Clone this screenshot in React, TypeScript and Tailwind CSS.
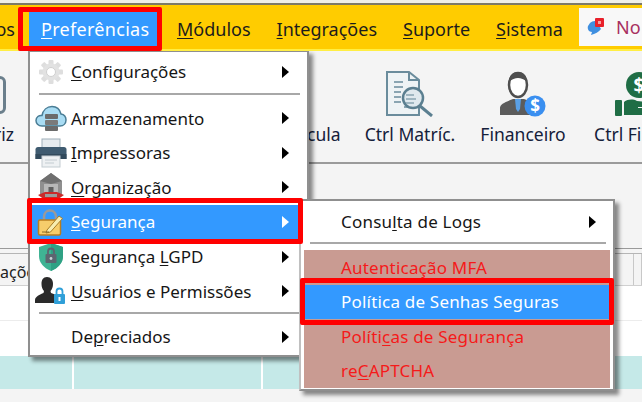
import { ReactNode } from "react";

const font = { fontFamily: '"Noto Sans", sans-serif' };

function GearIcon() {
  const teeth = [0, 45, 90, 135, 180, 225, 270, 315];
  return (
    <svg width="26" height="26" viewBox="0 0 26 26">
      {teeth.map((a) => (
        <rect key={a} x="10.500" y="1" width="5" height="6" rx="1" fill="#dedede" transform={`rotate(${a} 13 13)`} />
      ))}
      <circle cx="13" cy="13" r="8.500" fill="#e2e2e2" />
      <circle cx="13" cy="13" r="4.500" fill="#ffffff" stroke="#d0d0d0" />
    </svg>
  );
}

function CloudIcon() {
  return (
    <svg width="32" height="27" viewBox="0 0 32 27">
      <path d="M7 21C3 21 1 18 1 15.500C1 12 4 10 7 10.500C8 5 12 1.500 17 1.500C22 1.500 25 5 26 9C29 9.500 31 12 31 15C31 18.500 28.500 21 25 21Z" fill="#a9dcf3" stroke="#4a7d95" strokeWidth="1.500" />
      <rect x="10" y="9" width="13" height="5" rx="1" fill="#6b6b6b" />
      <rect x="10" y="15" width="13" height="5" rx="1" fill="#7a7a7a" />
      <rect x="10" y="21" width="13" height="5" rx="1" fill="#6b6b6b" />
    </svg>
  );
}

function PrinterIcon() {
  return (
    <svg width="32" height="30" viewBox="0 0 32 30">
      <rect x="7" y="1" width="18" height="9" fill="#e6ebee" stroke="#9fb0b9" />
      <path d="M3 9H29C30.500 9 31.500 10 31.500 11.500V21H.5V11.500C.5 10 1.500 9 3 9Z" fill="#3f5b70" />
      <rect x=".5" y="16" width="31" height="5" fill="#324a5c" />
      <rect x="7" y="18" width="18" height="11" fill="#eef1f3" stroke="#c3ccd1" />
      <path d="M10 22H22M10 25H19" stroke="#c3ccd1" />
    </svg>
  );
}

function OrgIcon() {
  return (
    <svg width="28" height="28" viewBox="0 0 28 28">
      <path d="M14 0L25 8V21H3V8Z" fill="#8f8f8f" />
      <path d="M14 0L25 8L14 11L3 8Z" fill="#6f6f6f" />
      <rect x="7" y="11" width="14" height="10" fill="#b8b8b8" />
      <rect x="11.500" y="14" width="5" height="7" fill="#5f5f5f" />
      <path d="M1 22L8 19H20L27 22L20 27H8Z" fill="#c92a2a" />
      <path d="M8 21H20V24H8Z" fill="#9b9b9b" />
    </svg>
  );
}

function SecurityIcon() {
  return (
    <svg width="27" height="27" viewBox="0 0 27 27">
      <path d="M7 13V8C7 4 9.500 1.500 13 1.500C16.500 1.500 19 4 19 8V13" fill="none" stroke="#9a9a9a" strokeWidth="2.500" />
      <rect x="1.500" y="11" width="22" height="15" rx="1.500" fill="#f6cd6b" stroke="#b97d1f" strokeWidth="1.500" />
      <path d="M10 21L22 7L25.500 9.500L13.500 23L9 24Z" fill="#f7edb0" stroke="#a77c28" />
      <path d="M5 23H12" stroke="#8a6a2a" />
    </svg>
  );
}

function ShieldIcon() {
  return (
    <svg width="26" height="28" viewBox="0 0 26 28">
      <path d="M13 0L25 4V13C25 20 20 25 13 28C6 25 1 20 1 13V4Z" fill="#3fb394" />
      <path d="M13 0L25 4V13C25 20 20 25 13 28Z" fill="#2fa184" />
      <rect x="7.500" y="11" width="11" height="9" rx="1" fill="#5c6670" />
      <path d="M10 11V8.500C10 6.500 11.500 5.500 13 5.500C14.500 5.500 16 6.500 16 8.500V11" fill="none" stroke="#5c6670" strokeWidth="1.800" />
      <circle cx="13" cy="15.500" r="1.400" fill="#c8d2d6" />
    </svg>
  );
}

function UserLockIcon() {
  return (
    <svg width="31" height="28" viewBox="0 0 31 28">
      <path d="M12 0C16 0 18 3 18 7C18 10 17 12.500 15.500 14L16 16C19 17 21 18 22 19V26H0V23C0 19.500 5 17.500 8.500 16L9 14C7.500 12.500 6.500 10 6.500 7C6.500 3 8 0 12 0Z" fill="#2a2a2a" />
      <rect x="19" y="17" width="11" height="10" rx="1" fill="#2f9fd8" />
      <path d="M21.500 17V14.500C21.500 12.500 23 11.500 24.500 11.500C26 11.500 27.500 12.500 27.500 14.500V17" fill="none" stroke="#2f9fd8" strokeWidth="1.800" />
      <rect x="23.500" y="20" width="2" height="4" fill="#ffffff" />
    </svg>
  );
}

function MatricIcon() {
  return (
    <svg width="48" height="46" viewBox="0 0 48 46">
      <path d="M1 1H23L33 9V44H1Z" fill="#eef3f5" stroke="#6a8c9c" strokeWidth="2" />
      <path d="M23 1V9H33" fill="none" stroke="#6a8c9c" strokeWidth="2" />
      <path d="M8 11H17M8 16H17M8 21H15M8 26H15M8 31H15M18 36H25" stroke="#8aa5b2" strokeWidth="2" />
      <circle cx="27" cy="27" r="10" fill="#dfe9ee" stroke="#5b7f90" strokeWidth="2.500" />
      <path d="M20 24H28M20 28H30M20 32H28" stroke="#8aa5b2" strokeWidth="1.500" />
      <path d="M34 35L46 45" stroke="#5b7f90" strokeWidth="3" />
    </svg>
  );
}

function FinanceIcon() {
  return (
    <svg width="48" height="46" viewBox="0 0 48 46">
      <ellipse cx="19" cy="14" rx="9" ry="12" fill="#ffffff" stroke="#4f4f4f" strokeWidth="2.500" />
      <path d="M10 11C10 4 14 1 19 1C24 1 28 4 28 11C25 8 22 7 19 7C16 7 13 8 10 11Z" fill="#4f4f4f" />
      <path d="M1 44V37C1 33 6 31 14 28H25C30 30 33 31 35 33V44Z" fill="#5c5c5c" />
      <path d="M16 28H22L21 38L19 41L17 38Z" fill="#5aa0e6" />
      <circle cx="36" cy="35" r="10.500" fill="#3a8ff0" />
      <text x="36" y="41" textAnchor="middle" fontSize="17" fontWeight="700" fill="#ffffff" style={font}>$</text>
    </svg>
  );
}

function CtrlFinIcon() {
  return (
    <svg className="ml-[4px]" width="56" height="46" viewBox="0 0 56 46">
      <circle cx="25" cy="14" r="13" fill="#1f6d45" />
      <text x="25" y="21" textAnchor="middle" fontSize="19" fontWeight="700" fill="#ffffff" style={font}>$</text>
      <rect x="1" y="29" width="7" height="16" rx="1" fill="#1f6d45" />
      <path d="M10 31C14 28 19 28 23 30L33 31C36 31 36 36 33 36H24V37H36L50 31C54 30 55 34 52 36L38 44H10Z" fill="#1f6d45" />
    </svg>
  );
}

function NoticeIcon() {
  return (
    <svg width="18" height="20" viewBox="0 0 18 20">
      <path d="M3 6C5 4 9 3 10 5L14 12C12 15 8 17 4 18L5 15C2 15 0 12 1 9Z" fill="#3f8fe0" />
      <rect x="8" y="1" width="9" height="9" rx="1" fill="#e8202a" />
      <rect x="11" y="4" width="3" height="3" fill="#f7a0a0" />
    </svg>
  );
}

function Mn({ children }: { children: ReactNode }) {
  return <u className="underline-offset-2 decoration-1">{children}</u>;
}

function MenuBarItem({ children }: { children: ReactNode }) {
  return <div className="px-[13px] text-[18px] text-[#1c1c1c] whitespace-nowrap">{children}</div>;
}

function ToolItem({ icon, label, className }: { icon: ReactNode; label: string; className: string }) {
  return (
    <div className={`flex shrink-0 flex-col items-center ${className}`}>
      <div className="flex h-[48px] items-end">{icon}</div>
      <div className="mt-[6px] text-[17.5px] leading-[22px] text-[#14203a] whitespace-nowrap">{label}</div>
    </div>
  );
}

function Arrow({ white }: { white?: boolean }) {
  return (
    <div
      className={`h-0 w-0 border-y-[6px] border-l-[7px] border-y-transparent ${white ? "border-l-white" : "border-l-black"}`}
    />
  );
}

function MainRow({ icon, children, active, tall }: { icon?: ReactNode; children: ReactNode; active?: boolean; tall?: boolean }) {
  return (
    <div
      className={`relative flex items-center ${tall ? "h-[36px]" : "h-[34.6px]"} ${active ? "bg-[#3399ff] text-white" : "text-[#161616]"}`}
    >
      <div className="flex w-[41px] shrink-0 items-center justify-center">{icon}</div>
      <div className="flex-1 whitespace-nowrap text-[17px]">{children}</div>
      <div className="mr-[18px]">
        <Arrow white={active} />
      </div>
      {active && <div className="absolute -left-[3px] right-[4px] -top-[7px] -bottom-[5px] z-10 rounded-[2px] border-[5px] border-[#ff0000]" />}
    </div>
  );
}

function SubRow({ children, active }: { children: ReactNode; active?: boolean }) {
  return (
    <div
      className={`relative flex h-[34.5px] items-center pl-[37px] whitespace-nowrap text-[17px] tracking-[0.2px] ${active ? "bg-[#3399ff] text-white" : "text-[#f51a1a]"}`}
    >
      {children}
      {active && <div className="absolute -left-[4px] -right-[4px] -top-[7px] -bottom-[6px] rounded-[2px] border-[5px] border-[#ff0000]" />}
    </div>
  );
}

export default function App() {
  return (
    <div className="relative h-[402px] w-[642px] overflow-hidden bg-[#f4f4f4]" style={font}>
      {/* TOP BAR */}
      <div className="h-[3px] bg-[#efefe8]" />
      <div className="h-[2px] bg-[#7d7a68]" />
      <div className="relative z-10 flex h-[46px] items-center border-b-2 border-b-[#ffee44] bg-[#ffcc00] pt-[4px]">
        <div className="-ml-[13px] w-[28px] text-right text-[18px] text-[#1c1c1c]">os</div>
        <div className="relative ml-[14px] mr-[7px] flex h-[36px] w-[128px] items-center bg-[#3399ff] pl-[12px] text-[18px] tracking-[0.3px] text-white">
          <span>
            <Mn>P</Mn>referências
          </span>
          <div className="absolute -left-[11px] -right-[5px] -top-[4px] -bottom-[4px] rounded-[2px] border-[5px] border-[#ff0000]" />
        </div>
        <MenuBarItem>
          <Mn>M</Mn>ódulos
        </MenuBarItem>
        <MenuBarItem>
          <Mn>I</Mn>ntegrações
        </MenuBarItem>
        <MenuBarItem>
          <Mn>S</Mn>uporte
        </MenuBarItem>
        <MenuBarItem>
          <Mn>S</Mn>istema
        </MenuBarItem>
        <div className="-mt-[1px] ml-auto flex h-[38px] w-[63px] items-center gap-[11px] self-start bg-[#f8f8f8] pl-[8px]">
          <NoticeIcon />
          <span className="text-[18px] text-[#a83060]">No</span>
        </div>
      </div>

      {/* TOOLBAR */}
      <div className="flex h-[113px] border-b-2 border-b-[#9a9a9a] pt-[18px]">
        <ToolItem
          className="-ml-[70px] w-[116px]"
          label="Matriz"
          icon={<div className="mb-[3px] h-[38px] w-[36px] rounded-md border-[3px] border-[#6b7f8c] bg-[#f4f4f4]" />}
        />
        <ToolItem className="ml-[206px] w-[100px]" label="Matrícula" icon={<div className="h-[40px] w-[30px]" />} />
        <ToolItem className="w-[116px]" label="Ctrl Matríc." icon={<MatricIcon />} />
        <ToolItem className="w-[110px]" label="Financeiro" icon={<FinanceIcon />} />
        <ToolItem className="w-[124px]" label="Ctrl Financ." icon={<CtrlFinIcon />} />
      </div>

      {/* GRID */}
      <div className="mt-[84px]">
        <div className="h-[1px] bg-[#9a9a9a]" />
        <div className="mt-[4px] h-[1px] bg-[#b5b5b5]" />
        <div className="flex h-[32px] border-b border-[#d0d0d0]">
          <div className="w-[40px] shrink-0 text-[16px] leading-[36px] text-[#222] whitespace-nowrap">ações</div>
          <div className="flex-1" />
          <div className="w-[9px] border-x border-[#c8c8c8]" />
        </div>
        <div className="h-[35px] border-b border-[#ececec] bg-white" />
        <div className="h-[35px] bg-white" />
        <div className="flex h-[33px] gap-[2px] bg-white">
          <div className="w-[72px] bg-[#c5e9e8]" />
          <div className="w-[187px] bg-[#c5e9e8]" />
          <div className="flex-1 bg-[#c5e9e8]" />
        </div>
      </div>

      {/* DROPDOWN */}
      <div className="absolute left-[28px] top-[50px] w-[281px] border-2 border-[#8f8f8f] bg-white pb-[1px] pt-[2px] shadow-[4px_4px_4px_rgba(0,0,0,0.45)]">
        <MainRow tall icon={<GearIcon />}>
          <Mn>C</Mn>onfigurações
        </MainRow>
        <div className="ml-[9px] mr-[7px] my-[3px] h-[2px] bg-[#a8a8a8]" />
        <div className="h-[3px]" />
        <MainRow icon={<CloudIcon />}>Armazenamento</MainRow>
        <MainRow icon={<PrinterIcon />}>
          <Mn>I</Mn>mpressoras
        </MainRow>
        <MainRow icon={<OrgIcon />}>
          <Mn>O</Mn>rganização
        </MainRow>
        <MainRow active icon={<SecurityIcon />}>
          <Mn>S</Mn>egurança
        </MainRow>
        <MainRow icon={<ShieldIcon />}>
          Segurança <Mn>L</Mn>GPD
        </MainRow>
        <MainRow icon={<UserLockIcon />}>
          <Mn>U</Mn>suários e Permissões
        </MainRow>
        <div className="ml-[9px] mr-[7px] mb-[6px] mt-[3px] h-[2px] bg-[#a8a8a8]" />
        <MainRow>
          De<Mn>p</Mn>reciados
        </MainRow>
      </div>

      {/* SUBMENU */}
      <div className="absolute left-[299px] top-[199px] w-[316px] border-2 border-[#8f8f8f] border-l-[#c0c0c0] bg-white pb-[1px] shadow-[4px_4px_4px_rgba(0,0,0,0.45)]">
        <div className="flex h-[41px] items-center justify-between pl-[40px] pr-[17px] text-[17px] tracking-[0.2px] text-[#161616]">
          <span>
            Consu<Mn>l</Mn>ta de Logs
          </span>
          <Arrow />
        </div>
        <div className="ml-[9px] mr-[7px] h-[2px] bg-[#a8a8a8]" />
        <div className="mx-[3px] mt-[6px] bg-[#c99b92]">
          <SubRow>Autenticação MFA</SubRow>
          <SubRow active>Política de Senhas Seguras</SubRow>
          <SubRow>
            Políti<Mn>c</Mn>as de Segurança
          </SubRow>
          <SubRow>
            re<Mn>C</Mn>APTCHA
          </SubRow>
        </div>
      </div>
    </div>
  );
}
